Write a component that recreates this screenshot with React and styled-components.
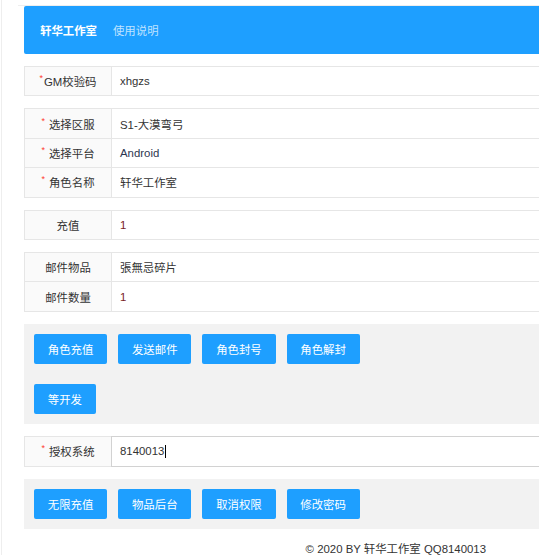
import React from "react";
import styled, { createGlobalStyle } from "styled-components";

const GlobalStyle = createGlobalStyle`
  html, body {
    margin: 0;
    padding: 0;
    background: #fff;
    overflow: hidden;
  }
  body {
    font-family: "Liberation Sans", Arial, "Noto Sans CJK SC", sans-serif;
    font-size: 11.2px;
    color: #333;
  }
`;

const Page = styled.div`
  margin-left: 1px;
  border-left: 1px solid #eeeeee;
  min-height: 100vh;
  padding: 5px 0 0 16px;
  box-sizing: border-box;
`;

const Content = styled.div`
  width: 760px;
  border-top: 1px solid #eeeeee;
  padding-left: 6px;
`;

const Header = styled.div`
  height: 48px;
  background: #1e9fff;
  border-radius: 2px;
  display: flex;
  align-items: center;
  padding-left: 16px;
`;

const Title = styled.div`
  color: #fff;
  font-weight: bold;
  font-size: 11.4px;
`;

const NavLink = styled.a`
  color: rgba(255, 255, 255, 0.72);
  margin-left: 16px;
  font-size: 11.4px;
  text-decoration: none;
`;

const Form = styled.div`
  margin-top: 12px;
  display: flex;
  flex-direction: column;
  gap: 12px;
`;

const Group = styled.div`
  display: flex;
  flex-direction: column;
`;

const Row = styled.div`
  display: flex;
  height: 30.4px;
  & + & {
    margin-top: -1px;
  }
`;

const Label = styled.div`
  width: 87px;
  box-sizing: border-box;
  border: 1px solid #e6e6e6;
  border-right: none;
  background: #fafafa;
  display: flex;
  align-items: center;
  justify-content: center;
  color: #333;
  font-size: 11.4px;
`;

const Star = styled.span`
  color: #ff3b30;
  font-size: 9px;
  margin-right: ${(p) => (p.$tight ? "1px" : "4px")};
  position: relative;
  top: -3px;
`;

const Input = styled.div`
  flex: 1;
  box-sizing: border-box;
  border: 1px solid ${(p) => (p.$focus ? "#d2d2d2" : "#e6e6e6")};
  background: #fff;
  display: flex;
  align-items: center;
  padding-left: 8px;
  color: ${(p) => p.$color || "#333"};
  font-size: 11.4px;
`;

const Caret = styled.span`
  display: inline-block;
  width: 1px;
  height: 13px;
  background: #000;
  margin-left: 1px;
`;

const Panel = styled.div`
  background: #f2f2f2;
  padding: 10px;
  display: flex;
  flex-direction: column;
  gap: 19.6px;
`;

const ButtonRow = styled.div`
  display: flex;
  gap: 11px;
`;

const Button = styled.button`
  height: 30.4px;
  padding: 0 13.8px;
  border: none;
  border-radius: 2px;
  background: #1e9fff;
  color: #fff;
  font-family: inherit;
  font-size: 11.4px;
  cursor: pointer;
  white-space: nowrap;
`;

const Footer = styled.div`
  margin-top: 11px;
  width: 539px;
  display: flex;
  justify-content: flex-end;
  padding-right: 77px;
  box-sizing: border-box;
  font-size: 11.4px;
  color: #333;
`;

function Field({ label, required, tight, value, color, focus, caret }) {
  return (
    <Row>
      <Label>
        {required && <Star $tight={tight}>*</Star>}
        {label}
      </Label>
      <Input $color={color} $focus={focus}>
        {value}
        {caret && <Caret />}
      </Input>
    </Row>
  );
}

export default function App() {
  return (
    <>
      <GlobalStyle />
      <Page>
        <Content>
          <Header>
            <Title>轩华工作室</Title>
            <NavLink>使用说明</NavLink>
          </Header>
          <Form>
            <Group>
              <Field label="GM校验码" required tight value="xhgzs" />
            </Group>
            <Group>
              <Field label="选择区服" required value="S1-大漠弯弓" />
              <Field label="选择平台" required value="Android" color="#2b3550" />
              <Field label="角色名称" required value="轩华工作室" />
            </Group>
            <Group>
              <Field label="充值" value="1" color="#7a1f1f" />
            </Group>
            <Group>
              <Field label="邮件物品" value="張無忌碎片" />
              <Field label="邮件数量" value="1" color="#7a1f1f" />
            </Group>
            <Panel>
              <ButtonRow>
                <Button>角色充值</Button>
                <Button>发送邮件</Button>
                <Button>角色封号</Button>
                <Button>角色解封</Button>
              </ButtonRow>
              <ButtonRow>
                <Button>等开发</Button>
              </ButtonRow>
            </Panel>
            <Group>
              <Field label="授权系统" required value="8140013" focus caret />
            </Group>
            <Panel>
              <ButtonRow>
                <Button>无限充值</Button>
                <Button>物品后台</Button>
                <Button>取消权限</Button>
                <Button>修改密码</Button>
              </ButtonRow>
            </Panel>
          </Form>
          <Footer>© 2020 BY 轩华工作室 QQ8140013</Footer>
        </Content>
      </Page>
    </>
  );
}
